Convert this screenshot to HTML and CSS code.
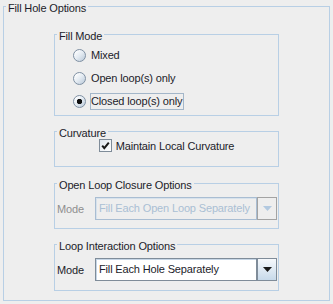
FILE: index.html
```
<!DOCTYPE html>
<html lang="en">
<head>
    <meta charset="UTF-8">
    <title>Fill Hole Options</title>
    <link rel="stylesheet" href="styles.css">
</head>
<body>
    <fieldset class="panel">
        <legend>Fill Hole Options</legend>
        <div class="stack">
            <!-- Fill mode radios -->
            <fieldset class="group">
                <legend>Fill Mode</legend>
                <div class="fill-mode">
                    <div class="radio-row"><span class="radio"></span><span class="label">Mixed</span></div>
                    <div class="radio-row"><span class="radio"></span><span class="label">Open loop(s) only</span></div>
                    <div class="radio-row"><span class="radio checked"></span><span class="label focused">Closed loop(s) only</span></div>
                </div>
            </fieldset>

            <fieldset class="group">
                <legend>Curvature</legend>
                <div class="check-row">
                    <span class="checkbox">
                        <svg width="11" height="11" viewBox="0 0 11 11"><path d="M2.2 5.6 L4.3 8.2 L8.8 2.6" fill="none" stroke="#1a1a1a" stroke-width="2"/></svg>
                    </span>
                    <span>Maintain Local Curvature</span>
                </div>
            </fieldset>

            <fieldset class="group closure">
                <legend>Open Loop Closure Options</legend>
                <div class="mode-row">
                    <span class="mode-label disabled">Mode</span>
                    <div class="combo disabled">
                        <div class="combo-field">Fill Each Open Loop Separately</div>
                        <div class="combo-btn"><svg width="9" height="5" viewBox="0 0 9 5"><polygon points="0,0 9,0 4.5,5" fill="#b2c9e0"/></svg></div>
                    </div>
                </div>
            </fieldset>

            <fieldset class="group">
                <legend>Loop Interaction Options</legend>
                <div class="mode-row last">
                    <span class="mode-label">Mode</span>
                    <div class="combo">
                        <div class="combo-field">Fill Each Hole Separately</div>
                        <div class="combo-btn"><svg width="9" height="5" viewBox="0 0 9 5"><polygon points="0,0 9,0 4.5,5" fill="#1a1a1a"/></svg></div>
                    </div>
                </div>
            </fieldset>
        </div>
    </fieldset>
</body>
</html>
```
FILE: styles.css
```
body {
    margin: 0;
    background-color: #eeeeee;
    color: #1c1c2a;
    font-family: "Liberation Sans", Arial, sans-serif;
    font-size: 11px;
    letter-spacing: -0.15px;
}
fieldset {
    margin: 0;
    padding: 0;
    min-width: 0;
    border: 1px solid #b8cfe5;
}
legend {
    margin-left: 2px;
    padding: 0 2px;
    height: 13px;
    line-height: 17px;
}
.panel {
    margin: 0 3px;
}
.stack {
    display: flex;
    flex-direction: column;
    gap: 9px;
    padding: 15px 50px 9px;
}
.fill-mode {
    padding: 3px 0 2px 18px;
}
.radio-row {
    display: flex;
    align-items: center;
    gap: 4px;
    height: 23px;
}
.radio {
    width: 13px;
    height: 13px;
    box-sizing: border-box;
    border: 1px solid #7f90a3;
    border-radius: 50%;
    background: linear-gradient(135deg, #ffffff 10%, #e4ebf2 50%, #b9c8d8 100%);
}
.radio.checked {
    background: radial-gradient(circle, #111111 0 2.4px, transparent 3px),
        linear-gradient(135deg, #ffffff 10%, #e4ebf2 50%, #b9c8d8 100%);
}
.label {
    border: 1px solid transparent;
    padding: 0 1px 0 0;
    line-height: 15px;
}
.label.focused {
    border-color: #a3b6c9;
}
.check-row {
    display: flex;
    justify-content: center;
    align-items: center;
    gap: 4px;
    height: 15px;
    padding-bottom: 13px;
}
.checkbox {
    width: 13px;
    height: 13px;
    box-sizing: border-box;
    border: 1px solid #7f8c99;
    background: linear-gradient(135deg, #dfe6ee, #ffffff);
    display: flex;
    align-items: center;
    justify-content: center;
}
.closure {
    margin-top: 1px;
}
.mode-row {
    display: flex;
    align-items: center;
    padding: 7px 1px 8px 2px;
}
.mode-row.last {
    padding-bottom: 9px;
}
.mode-label {
    width: 38px;
}
.mode-label.disabled {
    color: #8f8f8f;
}
.combo {
    flex: 1;
    display: flex;
    height: 23px;
}
.combo-field {
    flex: 1;
    box-sizing: border-box;
    border: 1px solid #7f8c99;
    box-shadow: inset 1px 1px 0 #c6d6e6;
    background-color: #ffffff;
    padding-left: 3px;
    line-height: 21px;
}
.combo-btn {
    width: 20px;
    box-sizing: border-box;
    border: 1px solid #7f8c99;
    background: linear-gradient(#f6f9fc, #c7d9ea);
    display: flex;
    align-items: center;
    justify-content: center;
}
.combo.disabled .combo-field {
    border-color: #a9bdd2;
    box-shadow: inset 1px 1px 0 #d7e2ec;
    background-color: #eeeeee;
    color: #aabfd4;
}
.combo.disabled .combo-btn {
    border-color: #a3a3a3;
    background: #eeeeee;
}
```
